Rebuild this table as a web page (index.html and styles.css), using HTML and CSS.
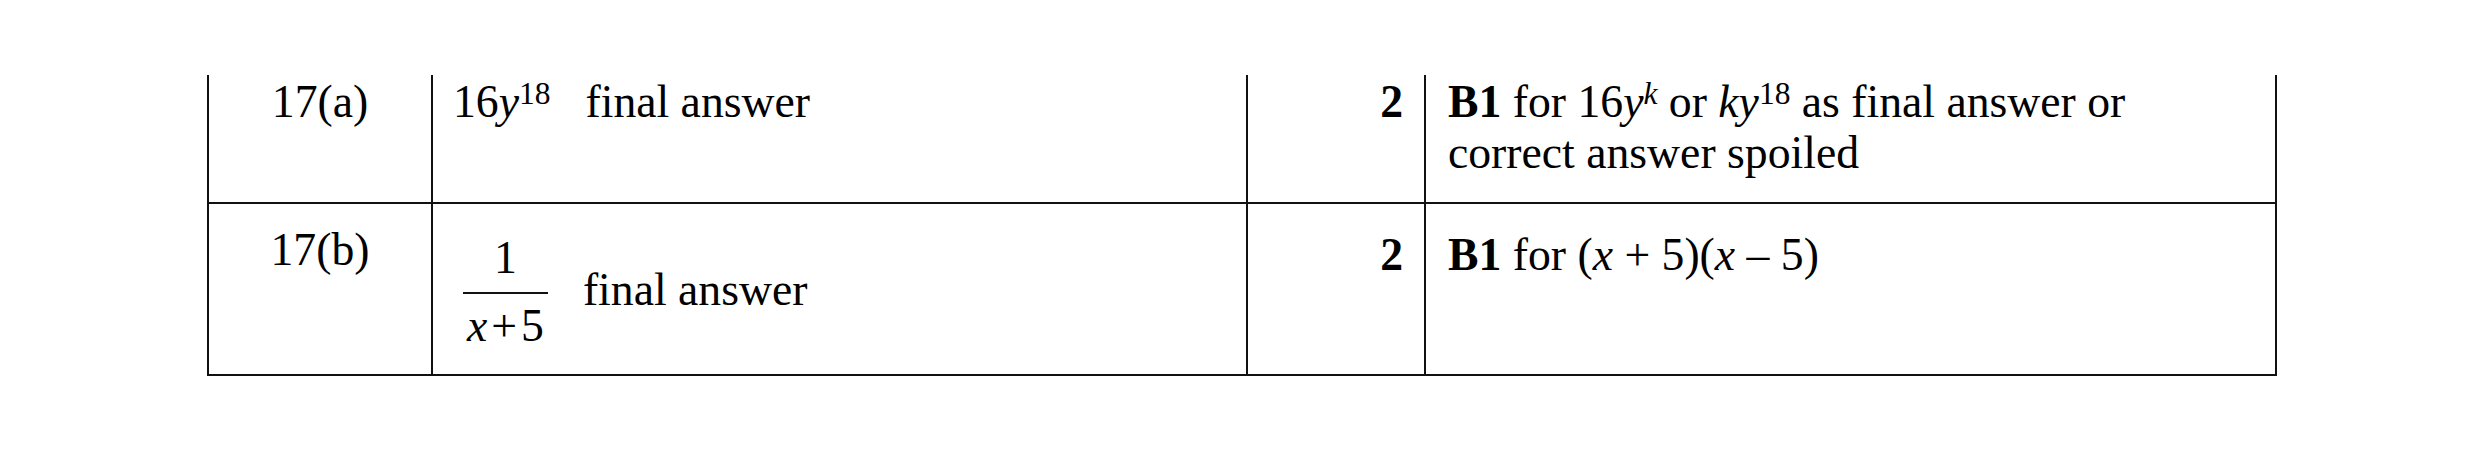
FILE: index.html
```html
<!DOCTYPE html>
<html lang="en">
<head>
<meta charset="utf-8">
<title>Mark scheme</title>
<link rel="stylesheet" href="styles.css">
</head>
<body>
<div class="sheet">
  <div class="scheme">
    <div class="cell q top-a">17(a)</div>
    <div class="cell ans top-a"><span class="expr">16<i>y</i><sup>18</sup></span><span class="note">final answer</span></div>
    <div class="cell mark top-a">2</div>
    <div class="cell guide top-g"><b>B1</b> for 16<i>y</i><sup><i>k</i></sup> or <i>ky</i><sup>18</sup> as final answer or<br>correct answer spoiled</div>

    <div class="cell q row2 mid-a">17(b)</div>
    <div class="cell ans row2 frac-cell">
      <span class="frac">
        <span class="num">1</span>
        <span class="bar"></span>
        <span class="den"><i>x</i><span class="op">+</span>5</span>
      </span>
      <span class="note frac-note">final answer</span>
    </div>
    <div class="cell mark row2 mid-b">2</div>
    <div class="cell guide row2 mid-b"><b>B1</b> for (<i>x</i> + 5)(<i>x</i> – 5)</div>
  </div>
</div>
</body>
</html>
```

FILE: styles.css
```css
html, body {
  margin: 0;
  padding: 0;
  background: #ffffff;
}

body {
  font-family: "Liberation Serif", "Times New Roman", serif;
  font-size: 45.7px;
  line-height: 45px;
  color: #000;
}

.sheet {
  padding: 75px 0 0 207px;
}

.scheme {
  display: grid;
  grid-template-columns: 224px 815px 178px 851px;
  grid-template-rows: 129px 172px;
  width: 2070px;
  border-left: 2px solid #111;
}

.cell {
  box-sizing: border-box;
  border-right: 2px solid #111;
  border-bottom: 2px solid #111;
  white-space: nowrap;
}

.q {
  text-align: center;
}

.ans {
  padding-left: 20px;
}

.mark {
  text-align: right;
  font-weight: bold;
  padding-right: 21px;
}

.guide {
  padding-left: 22px;
}

.top-a { padding-top: 4px; }
.top-g { padding-top: 1px; line-height: 51px; }
.mid-a { padding-top: 23px; }
.mid-b { padding-top: 28px; }

sup {
  font-size: 31.5px;
  line-height: 30px;
  vertical-align: 13px;
}

.note {
  margin-left: 35px;
}

.frac-cell {
  display: flex;
  align-items: flex-start;
  padding-top: 31px;
}

.frac {
  display: inline-flex;
  flex-direction: column;
  align-items: stretch;
  margin-left: 10px;
}

.num, .den {
  text-align: center;
}

.bar {
  height: 2px;
  background: #111;
  margin-top: 12px;
}

.den {
  margin-top: 9px;
  padding: 0 4px;
}

.op {
  margin: 0 4px;
}

.frac-note {
  margin-top: 32px;
  margin-left: 35px;
}
```
